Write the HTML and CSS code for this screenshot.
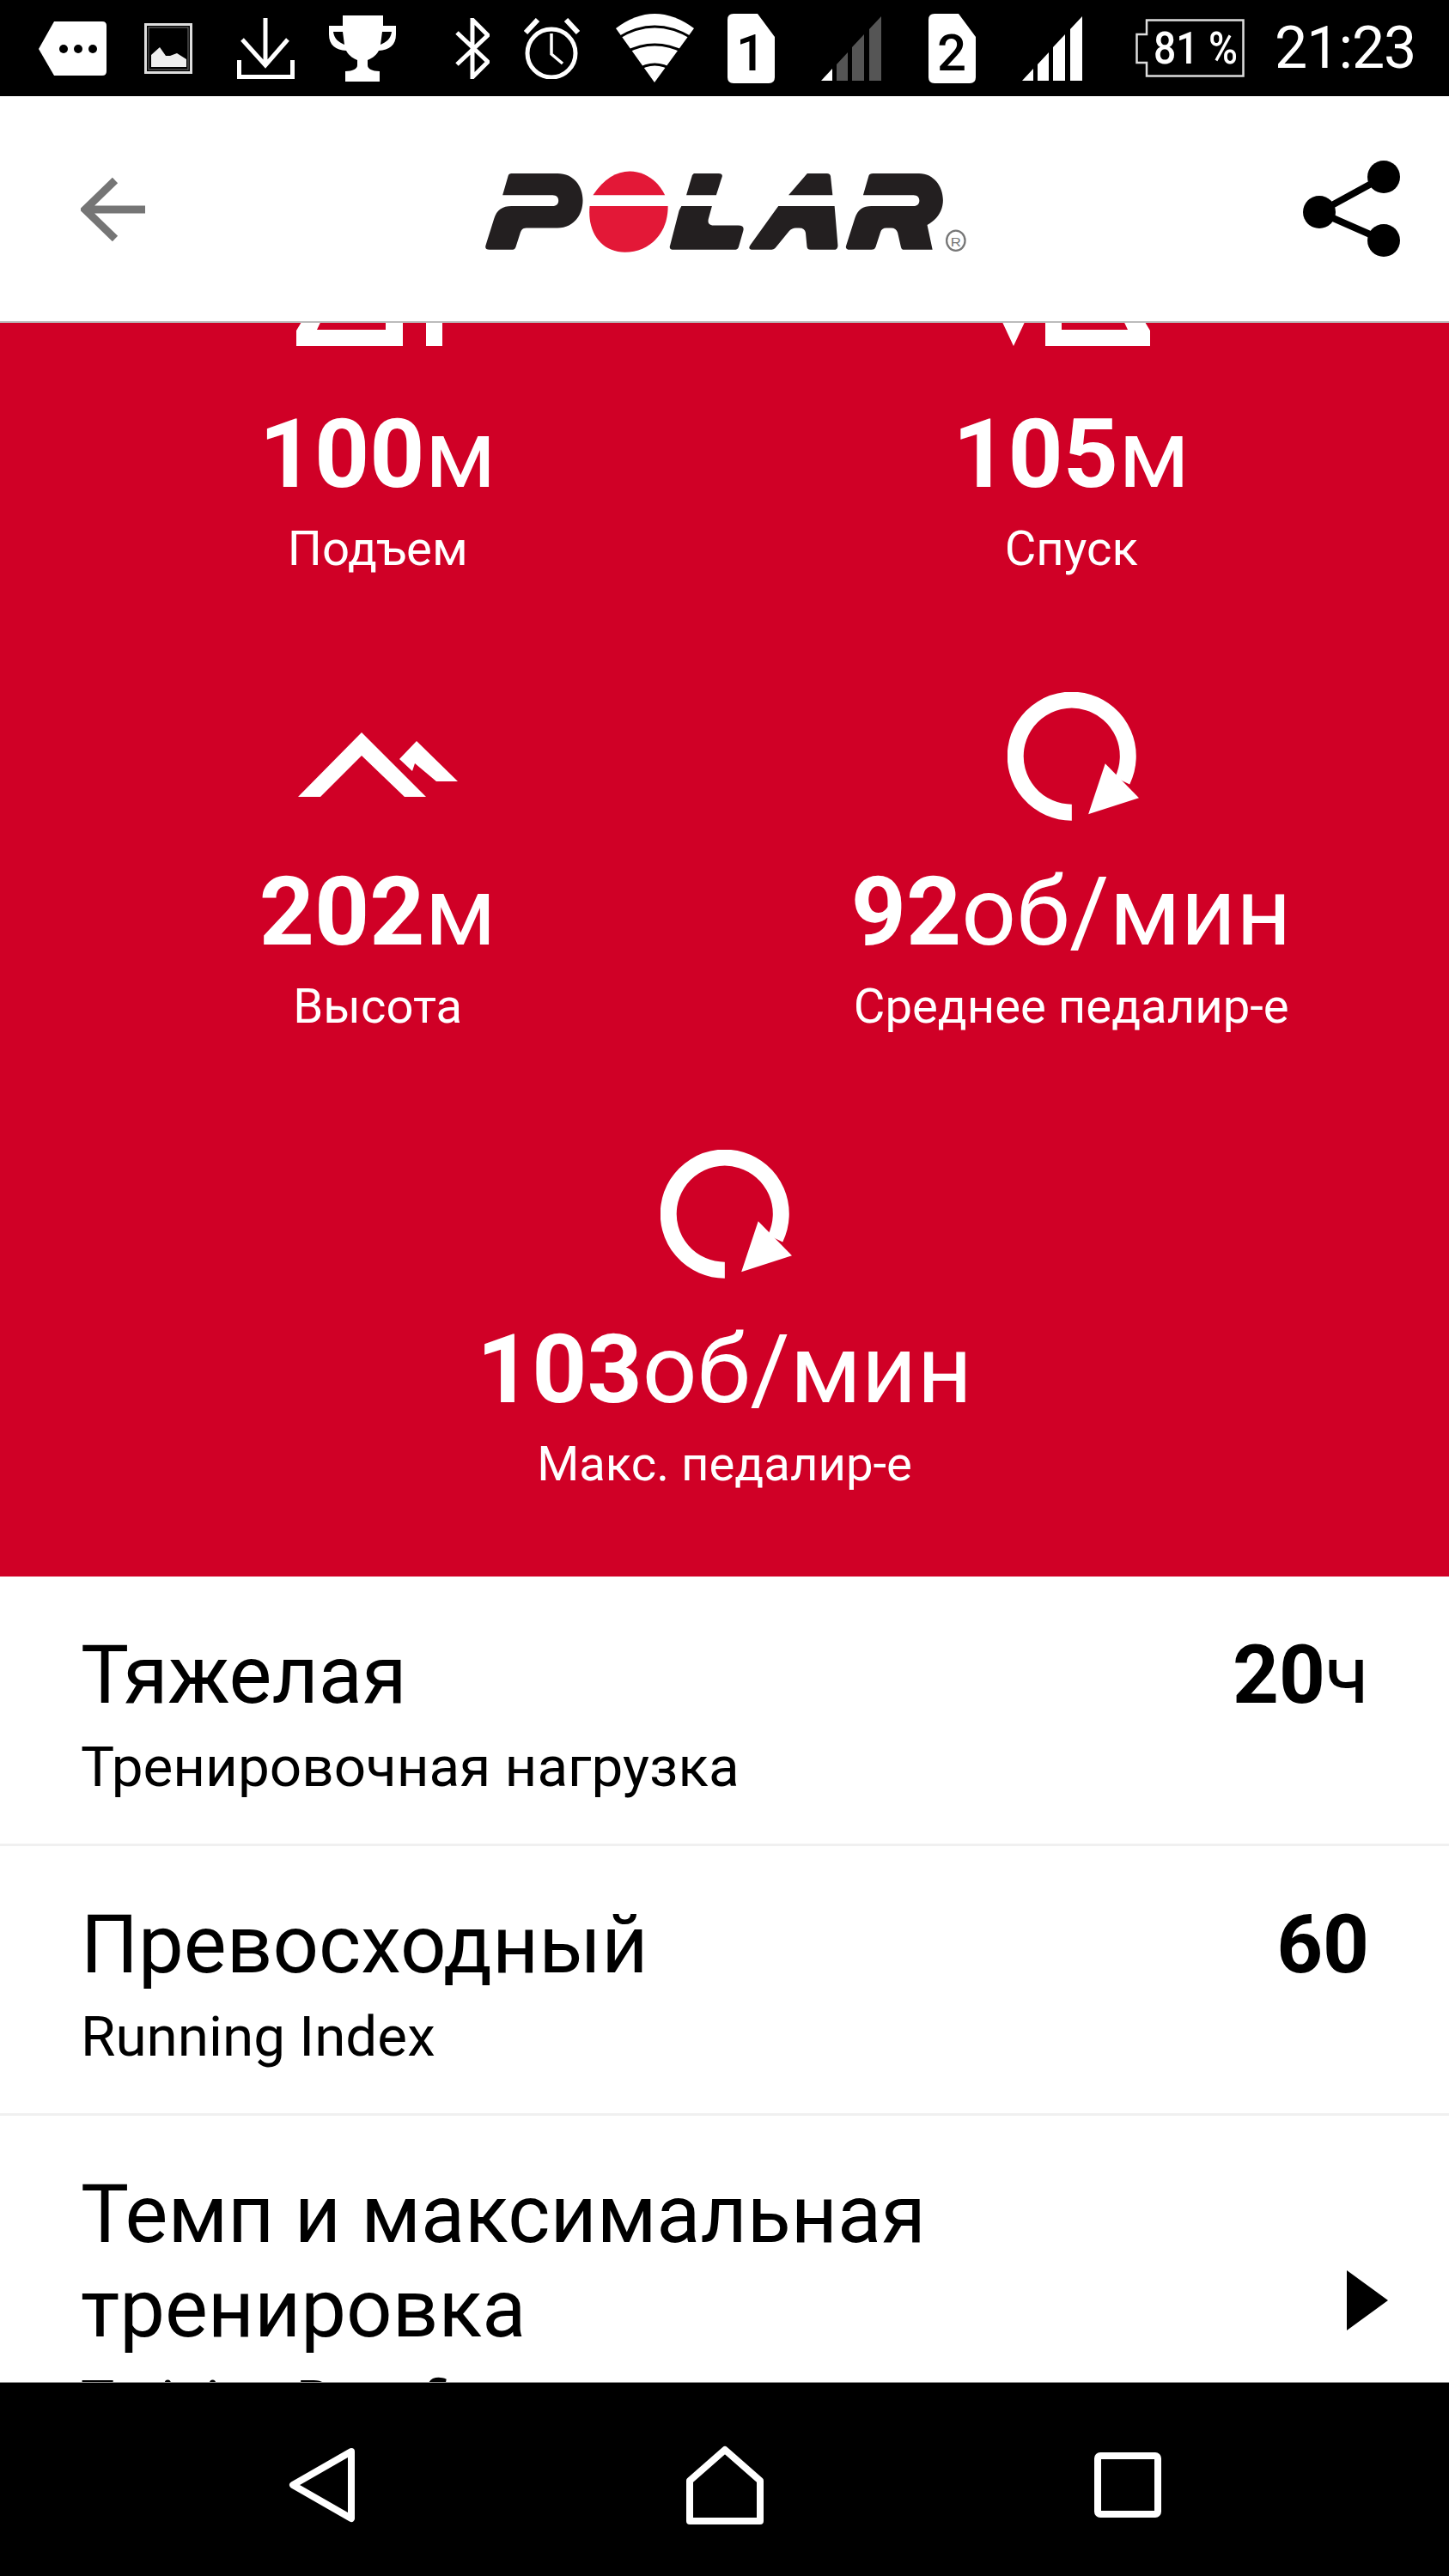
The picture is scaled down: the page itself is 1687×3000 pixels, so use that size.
FILE: index.html
```html
<!DOCTYPE html>
<html lang="ru">
<head>
    <meta charset="UTF-8">
    <title>Polar Flow</title>
    <link rel="stylesheet" href="styles.css">
</head>
<body>
<div class="phone">
    <!-- Status bar -->
    <div class="statusbar">
        <svg class="st-msg" viewBox="0 0 79 63"><path fill="#fff" d="M18 0H74Q79 0 79 5V58Q79 63 74 63H18L0 32Z"/><circle cx="29" cy="32" r="5"/><circle cx="46" cy="32" r="5"/><circle cx="63" cy="32" r="5"/></svg>
        <svg class="st-pic" viewBox="0 0 56 59"><rect x="1.5" y="1.5" width="53" height="56" fill="none" stroke="#ddd" stroke-width="3"/><rect x="5" y="5" width="46" height="49" fill="none" stroke="#777" stroke-width="1"/><path fill="#eee" d="M8 51V37L18 28L25 38L30 38L38 35L49 42V51Z"/></svg>
        <svg class="st-dl" viewBox="0 0 67 71"><path fill="none" stroke="#fff" stroke-width="5" d="M33 0V55M6 25L33 55L59 25M2.5 49V68.500H64.500V49"/></svg>
        <svg class="st-cup" viewBox="0 0 78 77"><path fill="#fff" fill-rule="evenodd" d="M16 0H63V12H78V22C78 35 70 40 58 41C54 48 49 50 45 52V58C45 62 50 65 59 65V77H19V65C28 65 33 62 33 58V52C29 50 24 48 20 41C8 40 0 35 0 22V12H16ZM5 19C6 27 11 31 18 34L16 19ZM73 19C72 27 67 31 60 34L62 19Z"/></svg>
        <svg class="st-bt" viewBox="0 0 40 71"><path fill="none" stroke="#fff" stroke-width="5" d="M2 17L38 51L20 69V2L38 20L2 54"/></svg>
        <svg class="st-alarm" viewBox="0 0 67 71"><ellipse cx="33" cy="41" rx="28" ry="28" fill="none" stroke="#fff" stroke-width="5"/><path fill="none" stroke="#fff" stroke-width="3.500" d="M33 18V42L46 53"/><path fill="none" stroke="#fff" stroke-width="6" d="M3 17L17 2M64 17L50 2"/></svg>
        <svg class="st-wifi" viewBox="0 0 91 80"><path fill="#fff" d="M0 17Q45 -17 91 17L45 80Z"/><path fill="none" stroke="#000" stroke-width="3" d="M3 28Q45 2 88 28M11 45Q45 27 80 45M24 66Q45 52 67 66"/></svg>
        <svg class="st-sim1" viewBox="0 0 55 81"><path fill="#fff" d="M7 0H35L55 27V74Q55 81 48 81H7Q0 81 0 74V7Q0 0 7 0Z"/><text class="sim-num" x="27" y="66" text-anchor="middle">1</text></svg>
        <svg class="st-sig1" viewBox="0 0 70 75"><path fill="#fff" d="M0 75L13 61V75Z"/><path fill="#555" d="M18 56L31 42V75H18ZM36 36L50 21V75H36ZM56 15L70 0V75H56Z"/></svg>
        <svg class="st-sim2" viewBox="0 0 55 81"><path fill="#fff" d="M7 0H35L55 27V74Q55 81 48 81H7Q0 81 0 74V7Q0 0 7 0Z"/><text class="sim-num" x="27" y="66" text-anchor="middle">2</text></svg>
        <svg class="st-sig2" viewBox="0 0 70 75"><path fill="#fff" d="M0 75L13 61V75ZM18 56L31 42V75H18ZM36 36L50 21V75H36ZM56 15L70 0V75H56Z"/></svg>
        <svg class="st-batt" viewBox="0 0 127 68"><path fill="none" stroke="#ddd" stroke-width="2.500" d="M13 1.500H125.500V66.500H13V51H1.500V18H13Z"/><text class="batt-num" x="21" y="52" textLength="98" lengthAdjust="spacingAndGlyphs">81 %</text></svg>
        <div class="st-time">21:23</div>
    </div>

    <!-- Header -->
    <div class="header">
        <svg class="back" viewBox="0 0 75 75"><path fill="none" stroke="#757575" stroke-width="9" d="M40 4L5 38L40 72M5 38H75"/></svg>
        <svg class="logo" viewBox="0 0 1568 340" preserveAspectRatio="none">
            <g fill="#231f20">
                <path d="M140 62H285C335 62 362 105 362 150C362 205 330 242 285 242H190C178 242 175 250 172 258L158 305Q155 314 145 314H78Q62 314 67 298L92 212C100 182 118 170 145 170H270C282 170 288 162 288 152C288 142 282 134 270 134H118L135 70Q137 62 145 62Z"/>
                <path d="M700 62H775Q788 62 786 72L768 134H677L695 68Z"/>
                <path d="M662 170H755L745 210C740 228 748 234 765 234H835Q855 234 850 252L836 305Q833 314 822 314H640Q622 314 628 298L655 185Z"/>
                <path d="M1045 62H1105Q1115 62 1116 72L1122 134H988Z"/>
                <path d="M957 170H1128L1138 300Q1138 314 1125 314H1055Q1045 314 1044 304L1040 258Q1038 242 1020 242H1010Q998 242 990 252L950 305Q944 314 930 314H880Q862 314 872 298Z"/>
                <path d="M1240 62H1385C1430 62 1458 105 1458 150C1458 185 1440 215 1410 232L1426 314H1340Q1332 314 1330 305L1320 258Q1316 242 1300 242H1285Q1272 242 1268 255L1253 305Q1250 314 1240 314H1175Q1158 314 1164 298L1190 210C1198 182 1215 170 1240 170H1368C1380 170 1386 162 1386 152C1386 142 1380 134 1368 134H1215L1232 70Q1234 62 1245 62Z"/>
            </g>
            <g fill="#e31837">
                <path d="M393 134C425 80 465 55 505 55C550 55 590 85 612 134Z"/>
                <path d="M383 170H621C622 260 565 322 490 322C420 322 375 260 383 170Z"/>
            </g>
            <ellipse cx="1497" cy="284" rx="28" ry="33" fill="none" stroke="#777" stroke-width="6"/>
            <text class="logo-r" x="1497" y="302" text-anchor="middle">R</text>
        </svg>
        <svg class="share" viewBox="0 0 113 113"><path fill="none" stroke="#000" stroke-width="8" d="M94 19L19 60L94 93"/><circle cx="94" cy="19" r="19"/><circle cx="19" cy="60" r="19"/><circle cx="94" cy="93" r="19"/></svg>
    </div>

    <div class="scroller">
        <!-- Stats -->
        <div class="stats">
            <div class="stat">
                <div class="stat-icon">
                    <svg class="ic-up" viewBox="0 0 190 60"><path fill="#fff" fill-rule="evenodd" d="M0 60V42L12 22V0H124V60ZM24 41H104V20H34Z"/><rect x="151" y="0" width="19" height="60" fill="#fff"/></svg>
                </div>
                <div class="stat-value"><b>100</b>м</div>
                <div class="stat-label">Подъем</div>
            </div>
            <div class="stat">
                <div class="stat-icon">
                    <svg class="ic-down" viewBox="0 0 173 60"><path fill="#fff" d="M0 30H28L14 60Z"/><path fill="#fff" fill-rule="evenodd" d="M51 60V0H161V22L173 42V60ZM70 41H147L137 20V10H70Z"/></svg>
                </div>
                <div class="stat-value"><b>105</b>м</div>
                <div class="stat-label">Спуск</div>
            </div>
            <div class="stat">
                <div class="stat-icon">
                    <svg class="ic-alt" viewBox="0 0 186 75"><path fill="#fff" d="M0 75L74 0L149 75H124L74 27L26 75ZM118 31L138 10L186 57H161L136 36L133 45Z"/></svg>
                </div>
                <div class="stat-value"><b>202</b>м</div>
                <div class="stat-label">Высота</div>
            </div>
            <div class="stat">
                <div class="stat-icon">
                    <svg class="ic-rpm" viewBox="95 48 460 450"><path fill="none" stroke="#fff" stroke-width="57" d="M320 469A197 197 0 1 1 497 358"/><path fill="#fff" d="M437 298L378 475L555 418Z"/></svg>
                </div>
                <div class="stat-value"><b>92</b>об/мин</div>
                <div class="stat-label">Среднее педалир-е</div>
            </div>
            <div class="stat stat-wide">
                <div class="stat-icon">
                    <svg class="ic-rpm" viewBox="95 48 460 450"><path fill="none" stroke="#fff" stroke-width="57" d="M320 469A197 197 0 1 1 497 358"/><path fill="#fff" d="M437 298L378 475L555 418Z"/></svg>
                </div>
                <div class="stat-value"><b>103</b>об/мин</div>
                <div class="stat-label">Макс. педалир-е</div>
            </div>
        </div>

        <!-- Rows -->
        <div class="row">
            <div class="row-text">
                <div class="row-title">Тяжелая</div>
                <div class="row-sub">Тренировочная нагрузка</div>
            </div>
            <div class="row-value"><b>20</b>ч</div>
        </div>
        <div class="row">
            <div class="row-text">
                <div class="row-title">Превосходный</div>
                <div class="row-sub">Running Index</div>
            </div>
            <div class="row-value"><b>60</b></div>
        </div>
        <div class="row row-link">
            <div class="row-text">
                <div class="row-title">Темп и максимальная<br>тренировка</div>
                <div class="row-sub">Training Benefit</div>
            </div>
            <svg class="chevron" viewBox="0 0 48 70"><path d="M0 0L48 35L0 70Z"/></svg>
        </div>
    </div>

    <!-- Android nav -->
    <div class="navbar">
        <svg class="nav-back" viewBox="0 0 78 88"><path fill="none" stroke="#fff" stroke-width="8" stroke-linejoin="round" d="M73 5L5 44L73 83Z"/></svg>
        <svg class="nav-home" viewBox="0 0 90 92"><path fill="none" stroke="#fff" stroke-width="8" stroke-linejoin="round" d="M45 5L4 41V88H86V41Z"/></svg>
        <svg class="nav-recent" viewBox="0 0 78 76"><rect x="4" y="4" width="70" height="68" rx="3" fill="none" stroke="#fff" stroke-width="8"/></svg>
    </div>
</div>
</body>
</html>
```

FILE: styles.css
```css
body, html {
    margin: 0;
    padding: 0;
    background-color: #fff;
    font-family: Roboto, "Liberation Sans", sans-serif;
}

svg {
    display: block;
    flex: none;
}

.phone {
    width: 1687px;
    height: 3000px;
    display: flex;
    flex-direction: column;
    overflow: hidden;
}

/* status bar */
.statusbar {
    height: 112px;
    flex: none;
    background-color: #000;
    color: #fff;
    display: flex;
    align-items: center;
    padding-left: 45px;
}

.st-msg { width: 79px; height: 63px; }
.st-pic { width: 56px; height: 59px; margin-left: 44px; }
.st-dl { width: 67px; height: 71px; margin-left: 52px; }
.st-cup { width: 78px; height: 77px; margin-left: 40px; }
.st-bt { width: 40px; height: 71px; margin-left: 69px; }
.st-alarm { width: 67px; height: 71px; margin-left: 39px; }
.st-wifi { width: 91px; height: 80px; margin-left: 41px; }
.st-sim1 { width: 55px; height: 81px; margin-left: 39px; }
.st-sig1 { width: 70px; height: 75px; margin-left: 54px; }
.st-sim2 { width: 55px; height: 81px; margin-left: 55px; }
.st-sig2 { width: 70px; height: 75px; margin-left: 54px; }
.st-batt { width: 127px; height: 68px; margin-left: 62px; }

.st-time {
    margin-left: 35px;
    font-size: 68px;
    letter-spacing: -1px;
    line-height: 112px;
}

.sim-num {
    font-family: Roboto, sans-serif;
    font-size: 60px;
    font-weight: 500;
    fill: #000;
}

.batt-num {
    font-family: Roboto, sans-serif;
    font-size: 52px;
    font-weight: 500;
    fill: #fff;
}

/* header */
.header {
    height: 264px;
    flex: none;
    box-sizing: border-box;
    background-color: #fff;
    border-bottom: 2px solid #bbb;
    display: flex;
    align-items: center;
    justify-content: space-between;
    padding: 0 57px 0 94px;
}

.back { width: 75px; height: 75px; }
.logo { width: 600px; height: 120px; margin-right: 6px; margin-bottom: 7px; }
.share { width: 113px; height: 113px; }

.logo-r {
    font-family: "Liberation Sans", sans-serif;
    font-size: 44px;
    fill: #777;
}

.scroller {
    flex: 1;
    min-height: 0;
    overflow: hidden;
}

/* red stats block */
.stats {
    background-color: #d00026;
    color: #fff;
    margin-top: -103px;
    padding: 0 36px 98px;
    display: grid;
    grid-template-columns: 1fr 1fr;
    row-gap: 134px;
    overflow: hidden;
}

.stat {
    text-align: center;
}

.stat-wide {
    grid-column: span 2;
}

.stat-icon {
    height: 150px;
    display: flex;
    justify-content: center;
    align-items: flex-end;
}

.ic-up { width: 190px; height: 60px; margin-bottom: 20px; }
.ic-down { width: 173px; height: 60px; margin-bottom: 20px; margin-left: 10px; }
.ic-alt { width: 186px; height: 75px; margin-bottom: 28px; }
.ic-rpm { width: 153px; height: 150px; margin-left: 4px; }

.stat-value {
    margin-top: 40px;
    font-size: 112px;
    line-height: 132px;
}

.stat-value b, .row-value b {
    font-weight: 700;
}

.stat-label {
    margin-top: 11px;
    font-size: 56.25px;
    line-height: 66px;
}

/* list rows */
.row {
    display: flex;
    justify-content: space-between;
    padding: 60px 93px 51px 94px;
    border-bottom: 3px solid #f0f0f0;
    background-color: #fff;
    color: #000;
}

.row-link {
    align-items: center;
    padding-right: 71px;
}

.row-title, .row-value {
    font-size: 94px;
    line-height: 110px;
}

.row-sub {
    margin-top: 14px;
    font-size: 65.6px;
    line-height: 76px;
}

.chevron { width: 48px; height: 70px; }

/* android nav */
.navbar {
    height: 226px;
    flex: none;
    box-sizing: border-box;
    background-color: #000;
    border-top: 1px solid #999;
    padding-top: 13px;
    display: flex;
    align-items: center;
    justify-content: center;
    gap: 385px;
}

.nav-back { width: 78px; height: 88px; }
.nav-home { width: 90px; height: 92px; }
.nav-recent { width: 78px; height: 76px; }
```
